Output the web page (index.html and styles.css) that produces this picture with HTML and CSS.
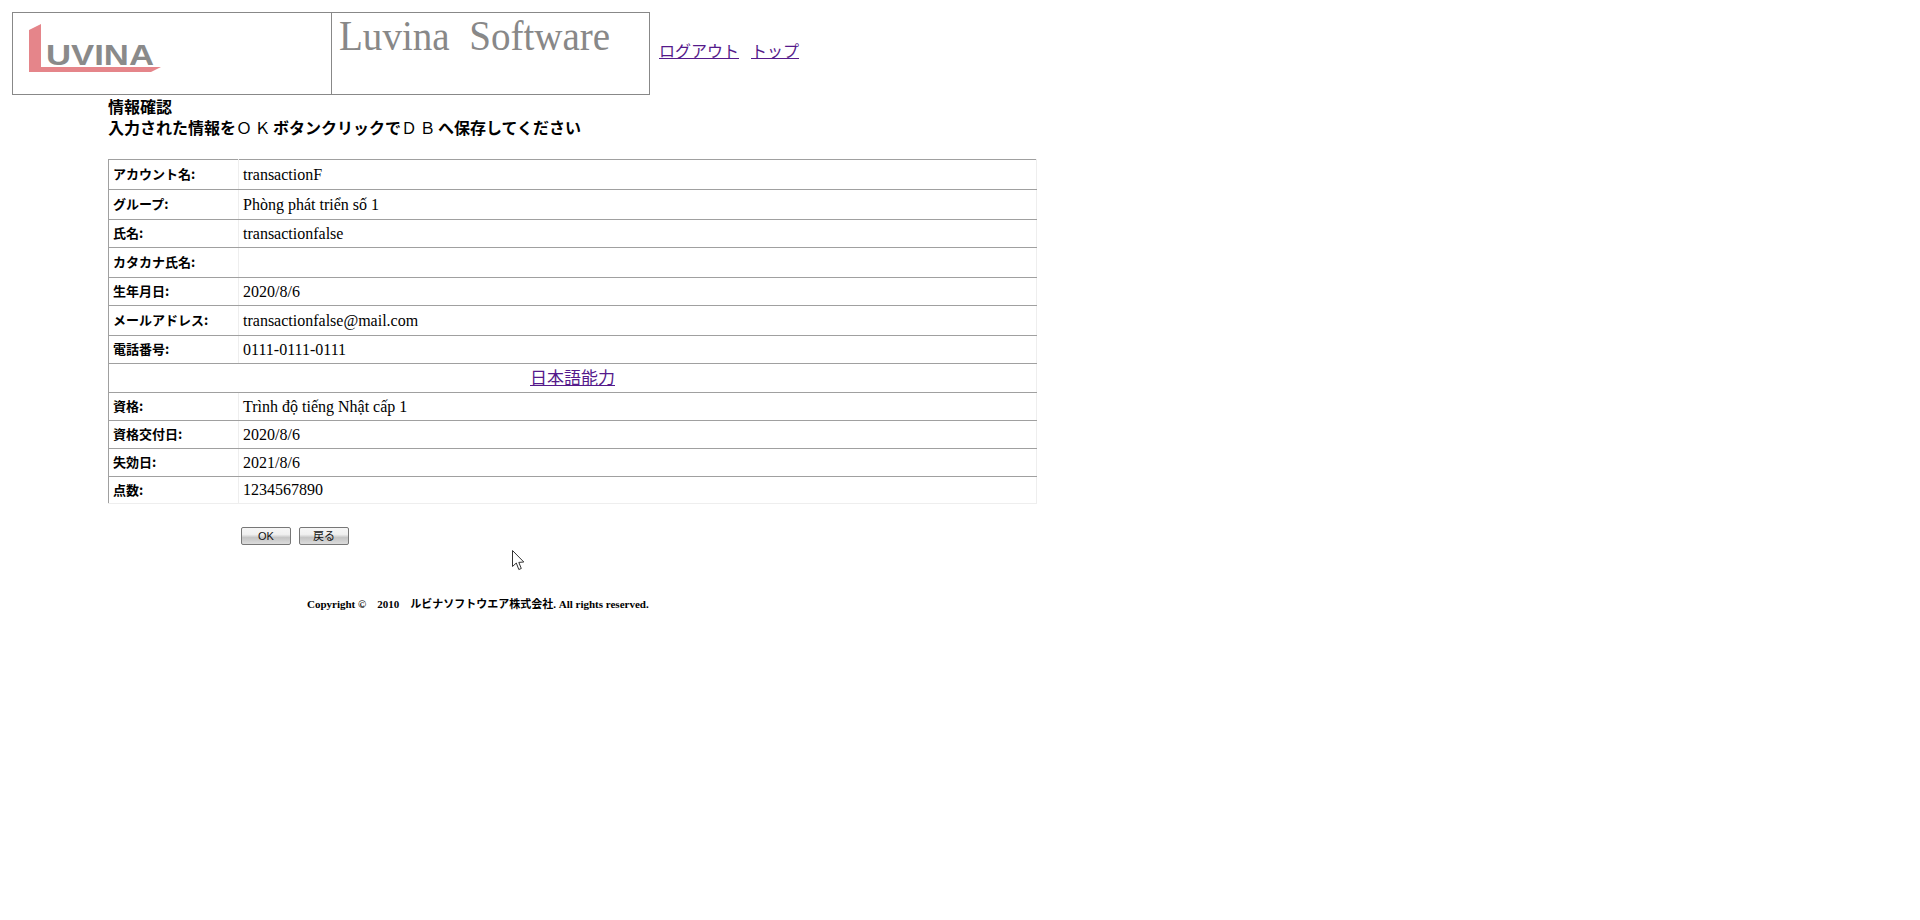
FILE: index.html
```html
<!DOCTYPE html>
<html lang="ja">
<head>
  <meta charset="UTF-8">
  <title>情報確認</title>
  <link rel="stylesheet" href="styles.css">
</head>
<body>

  <div class="header">
    <table class="header-table">
      <tr>
        <td class="logo-cell">
          <div class="logo">
            <svg class="logo-mark" width="134" height="50" viewBox="0 0 134 50">
              <polygon points="0,6 12,0 12,43 132,43 122,48 0,48" fill="#e5858a"/>
              <text x="17" y="41" class="logo-text" textLength="108" lengthAdjust="spacingAndGlyphs">UVINA</text>
            </svg>
          </div>
        </td>
        <td class="title-cell"><span class="title-text">Luvina&nbsp;&nbsp;Software</span></td>
      </tr>
    </table>
    <div class="header-links">
      <a href="#">ログアウト</a>
      <a href="#">トップ</a>
    </div>
  </div>

  <div class="content">
    <div class="heading">
      <div>情報確認</div>
      <div>入力された情報を<span class="thin">ＯＫ</span>ボタンクリックで<span class="thin">ＤＢ</span>へ保存してください</div>
    </div>

    <table class="info-table">
      <tr class="row-30"><th>アカウント名:</th><td>transactionF</td></tr>
      <tr class="row-30"><th>グループ:</th><td>Phòng phát triển số 1</td></tr>
      <tr><th>氏名:</th><td>transactionfalse</td></tr>
      <tr class="row-30"><th>カタカナ氏名:</th><td></td></tr>
      <tr><th>生年月日:</th><td>2020/8/6</td></tr>
      <tr class="row-30"><th>メールアドレス:</th><td>transactionfalse@mail.com</td></tr>
      <tr><th>電話番号:</th><td>0111-0111-0111</td></tr>
      <tr class="row-29"><td colspan="2" class="japanese-link"><a href="#">日本語能力</a></td></tr>
      <tr><th>資格:</th><td>Trình độ tiếng Nhật cấp 1</td></tr>
      <tr><th>資格交付日:</th><td>2020/8/6</td></tr>
      <tr><th>失効日:</th><td>2021/8/6</td></tr>
      <tr class="row-27"><th>点数:</th><td>1234567890</td></tr>
    </table>

    <div class="buttons">
      <button class="btn">OK</button>
      <button class="btn">戻る</button>
    </div>
  </div>

  <div class="footer">Copyright ©&nbsp;&nbsp;&nbsp;&nbsp;2010&nbsp;&nbsp;&nbsp;&nbsp;ルビナソフトウエア株式会社. All rights reserved.</div>

  <svg class="cursor" width="13" height="21" viewBox="0 0 13 21">
    <path d="M0.5 0.5 V16.5 L4.3 13 L6.8 19.5 L9.3 18.5 L6.8 12.4 L11.8 12 Z" fill="#fff" stroke="#333" stroke-width="1"/>
  </svg>

</body>
</html>
```

FILE: styles.css
```css
body {
  margin: 0;
  padding: 12px 0 0 12px;
  background: #fff;
  color: #000;
  font-family: "Liberation Serif", "Noto Sans CJK JP", serif;
  font-size: 16px;
}
a {
  color: #551a8b;
}
.header {
  display: flex;
  align-items: center;
}
.header-table {
  width: 638px;
  height: 83px;
  border-collapse: collapse;
}
.header-table td {
  border: 1px solid #888;
  padding: 0;
  vertical-align: top;
}
.logo-cell {
  width: 318px;
}
.logo {
  padding: 11px 0 0 16px;
}
.logo-mark {
  display: block;
}
.logo-text {
  font-family: "Liberation Sans", sans-serif;
  font-weight: bold;
  font-size: 29px;
  fill: #8a8a8a;
}
.title-cell {
  padding-left: 7px !important;
  color: #888;
  font-size: 42px;
  line-height: 46px;
}
.title-text {
  display: inline-block;
  transform: scaleX(0.93);
  transform-origin: left;
}
.header-links {
  display: flex;
  gap: 12px;
  margin: 0 0 7px 9px;
  font-family: "Noto Sans CJK JP", sans-serif;
}
.content {
  margin-left: 96px;
  padding-top: 1px;
}
.heading {
  font-family: "Noto Sans CJK JP", sans-serif;
  font-weight: bold;
  font-size: 16px;
  line-height: 21px;
  margin-bottom: 21px;
}
.thin {
  font-weight: normal;
  letter-spacing: 2.5px;
}
.info-table {
  width: 929px;
  border-collapse: collapse;
  font-size: 16px;
}
.info-table th,
.info-table td {
  border: 1px solid #a0a0a0;
  border-right-color: #eee;
  padding: 0 4px;
  line-height: 1;
  text-align: left;
}
.info-table td {
  height: 27px;
}
.info-table tr:last-child th,
.info-table tr:last-child td {
  border-bottom-color: #eee;
}
.info-table tr.row-30 td {
  height: 29px;
}
.info-table tr.row-29 td {
  height: 28px;
}
.info-table tr.row-27 td {
  height: 26px;
}
.info-table th {
  width: 121px;
  padding-bottom: 2px;
  font-family: "Noto Sans CJK JP", sans-serif;
  font-size: 13px;
}
.info-table .japanese-link {
  text-align: center;
  font-size: 17px;
}
.buttons {
  display: flex;
  gap: 8px;
  margin: 23px 0 0 133px;
}
.btn {
  width: 50px;
  height: 18px;
  padding: 1px 0 0;
  border: 1px solid #777;
  border-radius: 2px;
  background: linear-gradient(#f6f6f6 0, #f0f0f0 40%, #c4c4c4 60%, #dcdcdc 100%);
  font-family: "Liberation Sans", "Noto Sans CJK JP", sans-serif;
  font-size: 11px;
  line-height: 15px;
  color: #111;
}
.footer {
  margin: 50px 0 0 295px;
  font-weight: bold;
  font-size: 11px;
}
.cursor {
  position: absolute;
  left: 512px;
  top: 550px;
}
```
